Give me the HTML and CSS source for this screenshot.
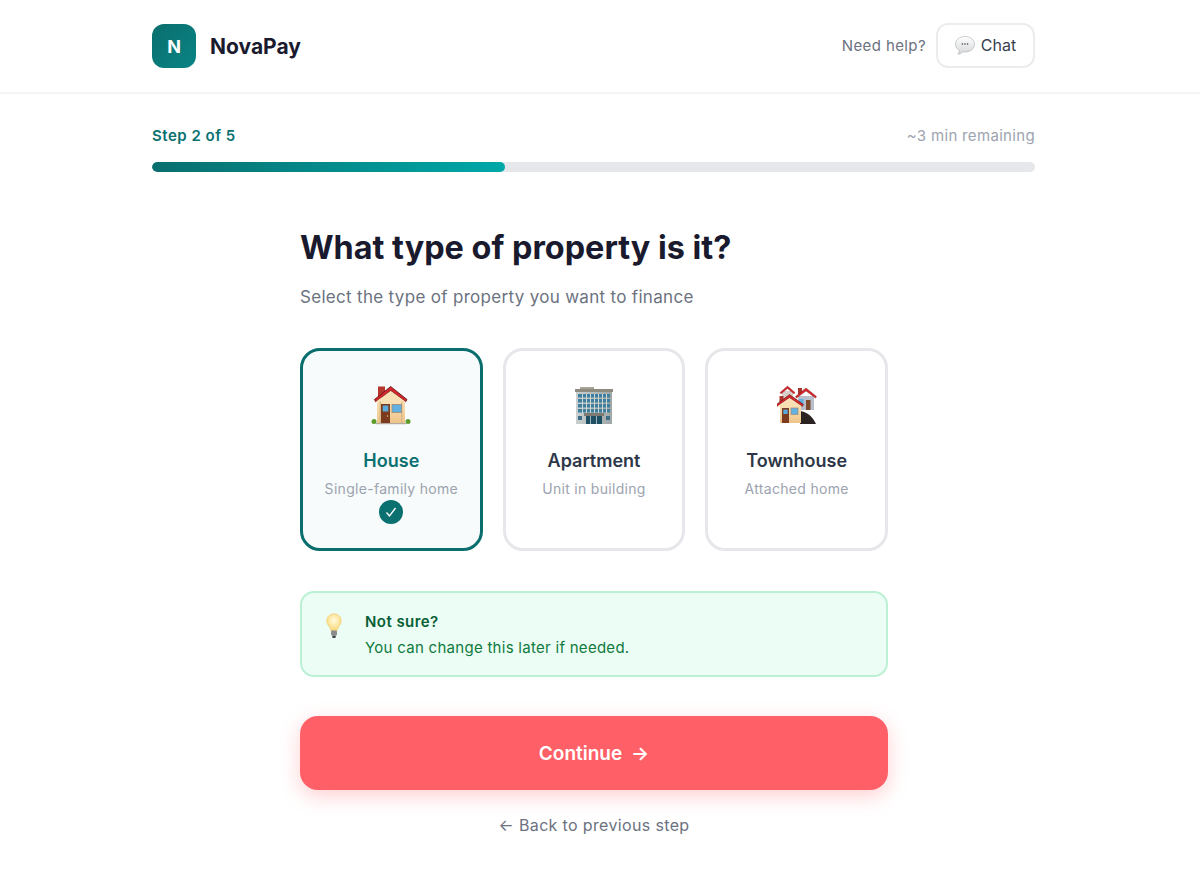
FILE: index.html
```html
<!DOCTYPE html>
<html lang="en">
<head>
    <meta charset="UTF-8">
    <meta name="viewport" content="width=device-width, initial-scale=1.0">
    <title>NovaPay - Property type</title>
    <link rel="stylesheet" href="styles.css">
</head>
<body>
    <svg class="defs" width="0" height="0" aria-hidden="true">
        <defs>
            <linearGradient id="wallGrad" x1="0" y1="0" x2="0" y2="1">
                <stop offset="0" stop-color="#fbe3b8"/>
                <stop offset="1" stop-color="#eec48a"/>
            </linearGradient>
            <linearGradient id="towerGrad" x1="0" y1="0" x2="1" y2="0">
                <stop offset="0" stop-color="#c9d0cf"/>
                <stop offset="1" stop-color="#9ea7a6"/>
            </linearGradient>
            <radialGradient id="bulbGrad" cx="0.5" cy="0.4" r="0.6">
                <stop offset="0" stop-color="#fffbe0"/>
                <stop offset="1" stop-color="#fbd877"/>
            </radialGradient>
            <linearGradient id="bubbleGrad" x1="0" y1="0" x2="0" y2="1">
                <stop offset="0" stop-color="#ffffff"/>
                <stop offset="1" stop-color="#d4d6d8"/>
            </linearGradient>
        </defs>
    </svg>

    <header class="topbar">
        <div class="brand">
            <div class="brand-mark">N</div>
            <span class="brand-name">NovaPay</span>
        </div>
        <div class="help">
            <span class="help-text">Need help?</span>
            <button class="chat-btn">
                <svg class="chat-icon" viewBox="0 0 20 19">
                    <path d="M10 .5C4.7.5.4 3.9.4 8.2c0 2.6 1.6 4.9 4.1 6.3-.2 1.3-.9 2.7-1.6 3.8 1.900-.3 3.800-1.400 5.100-2.500.6.1 1.300.2 2 .2 5.300 0 9.600-3.500 9.600-7.800S15.300.5 10 .5z" fill="url(#bubbleGrad)" stroke="#a9adb0" stroke-width=".6"/>
                    <circle cx="7.400" cy="8" r=".8" fill="#3a3f45"/>
                    <circle cx="10" cy="8" r=".8" fill="#3a3f45"/>
                    <circle cx="12.600" cy="8" r=".8" fill="#3a3f45"/>
                </svg>
                Chat
            </button>
        </div>
    </header>

    <section class="progress">
        <div class="progress-labels">
            <span class="step">Step 2 of 5</span>
            <span class="remaining">~3 min remaining</span>
        </div>
        <div class="track"><div class="fill" style="width: 40%"></div></div>
    </section>

    <main class="content">
        <h1>What type of property is it?</h1>
        <p class="subtitle">Select the type of property you want to finance</p>

        <div class="cards">
            <div class="card selected">
                <svg class="card-icon" viewBox="0 0 40 40">
                    <rect x="7" y="1.500" width="7" height="12" fill="#b5382f"/>
                    <rect x="6" y="15" width="28" height="23" fill="url(#wallGrad)"/>
                    <path d="M19.700 1.500 36 14.500l-1.300 2.300-15-11-15 11L3.400 14.500z" fill="#d0262c" stroke="#5e1010" stroke-width=".8"/>
                    <path d="M19.700 6 34.700 16.800H4.700z" fill="#f8dfb4"/>
                    <rect x="8.500" y="16.800" width="1.500" height="21.200" fill="#d9b98a"/>
                    <rect x="30" y="16.800" width="1.500" height="21.200" fill="#d9b98a"/>
                    <rect x="10" y="19" width="9" height="19" fill="#7c3a1e"/>
                    <rect x="11.700" y="20.500" width="5.600" height="6" fill="#59a9dc"/>
                    <circle cx="16.500" cy="31" r=".7" fill="#f2d16b"/>
                    <rect x="21" y="19.500" width="9.500" height="8" fill="#63b1e2" stroke="#9c8a72" stroke-width=".8"/>
                    <rect x="5" y="38" width="30" height="1.200" fill="#b3aba0"/>
                    <circle cx="3" cy="36.500" r="2.500" fill="#5d9c2c"/>
                    <circle cx="37" cy="36.500" r="2.500" fill="#5d9c2c"/>
                </svg>
                <div class="card-title">House</div>
                <div class="card-sub">Single-family home</div>
                <div class="check">
                    <svg viewBox="0 0 24 24" width="24" height="24">
                        <path d="M7.500 12.500l3 3.500 6-8" fill="none" stroke="#fff" stroke-width="1.400"/>
                    </svg>
                </div>
            </div>

            <div class="card">
                <svg class="card-icon" viewBox="0 0 40 40">
                    <rect x="6" y="2" width="14" height="3" fill="#a8a397"/>
                    <rect x="1" y="4" width="38" height="3" fill="#8f8a80"/>
                    <rect x="2" y="7" width="36" height="32" fill="url(#towerGrad)"/>
                    <g fill="#3f7f9e">
                        <rect x="4" y="9" width="32" height="3.500"/>
                        <rect x="4" y="14" width="32" height="3.500"/>
                        <rect x="4" y="19" width="32" height="3.500"/>
                        <rect x="4" y="24" width="32" height="3.500"/>
                    </g>
                    <g fill="#cfd6d6">
                        <rect x="8" y="9" width="1" height="19"/>
                        <rect x="12" y="9" width="1" height="19"/>
                        <rect x="16" y="9" width="1" height="19"/>
                        <rect x="20" y="9" width="1" height="19"/>
                        <rect x="24" y="9" width="1" height="19"/>
                        <rect x="28" y="9" width="1" height="19"/>
                        <rect x="32" y="9" width="1" height="19"/>
                    </g>
                    <rect x="4" y="31" width="4" height="4" fill="#3f6f88"/>
                    <rect x="32" y="31" width="4" height="4" fill="#3f6f88"/>
                    <rect x="10" y="28" width="20" height="3" fill="#7d7a72"/>
                    <rect x="12" y="31" width="16" height="8" fill="#1f4f63"/>
                    <rect x="16" y="31" width="1" height="8" fill="#9fb5bd"/>
                    <rect x="22" y="31" width="1" height="8" fill="#9fb5bd"/>
                </svg>
                <div class="card-title">Apartment</div>
                <div class="card-sub">Unit in building</div>
            </div>

            <div class="card">
                <svg class="card-icon" viewBox="0 0 40 40">
                    <rect x="5" y="6" width="11" height="9" fill="#d6cfca"/>
                    <path d="M10.500 1 18 7.500l-1 1.400-6.500-5.300L4 8.900 3 7.500z" fill="#d0262c" stroke="#7c1717" stroke-width=".3"/>
                    <rect x="21" y="11" width="16" height="14" fill="#b9c0cc"/>
                    <rect x="21" y="3" width="4" height="6" fill="#a8342c"/>
                    <path d="M29 3 39.500 11.500l-1 1.600L29 6l-9.500 7.100-1-1.600z" fill="#d0262c" stroke="#7c1717" stroke-width=".4"/>
                    <rect x="29" y="15" width="4.500" height="10" fill="#7c4a2a"/>
                    <rect x="22" y="14" width="4.500" height="5" fill="#63b1e2"/>
                    <path d="M23 39c1-5-1-10-3-13 8-1 16 5 19 13z" fill="#2a2321"/>
                    <rect x="3" y="19" width="21" height="19" fill="url(#wallGrad)"/>
                    <rect x="2.500" y="11" width="4" height="6" fill="#a8342c"/>
                    <path d="M12.500 9.500 26.500 19.500l-1.300 2.100-12.700-8.800-12.700 8.800L-.500 19.500z" fill="#d0262c" stroke="#5e1010" stroke-width=".6"/>
                    <path d="M12.500 13 25.200 21.600H-.200z" fill="#f8dfb4"/>
                    <rect x="5" y="23" width="7" height="15" fill="#7c3a1e"/>
                    <rect x="6.300" y="24.500" width="4.400" height="4.500" fill="#59a9dc"/>
                    <rect x="14" y="23" width="7" height="6.500" fill="#63b1e2" stroke="#9c8a72" stroke-width=".7"/>
                </svg>
                <div class="card-title">Townhouse</div>
                <div class="card-sub">Attached home</div>
            </div>
        </div>

        <div class="tip">
            <svg class="tip-icon" viewBox="0 0 16 26">
                <path d="M8 .8C3.900.8.800 3.900.800 7.800c0 2.400 1 3.900 2.200 5.500.9 1.200 1.700 2.500 1.900 4.200h6.200c.2-1.700 1-3 1.900-4.200 1.200-1.600 2.200-3.100 2.200-5.500C15.200 3.900 12.100.8 8 .8z" fill="url(#bulbGrad)" stroke="#edc968" stroke-width=".6"/>
                <rect x="5" y="17.500" width="6" height="5" rx="1" fill="#8b8b8b"/>
                <rect x="6.200" y="22.500" width="3.600" height="2.500" rx="1" fill="#45474a"/>
            </svg>
            <div class="tip-body">
                <div class="tip-title">Not sure?</div>
                <div class="tip-text">You can change this later if needed.</div>
            </div>
        </div>

        <button class="continue">Continue <span class="arrow">→</span></button>
        <a class="back" href="#">← Back to previous step</a>
    </main>
</body>
</html>
```

FILE: styles.css
```css
* {
    box-sizing: border-box;
}
body {
    margin: 0;
    background: #fff;
    font-family: 'Inter', 'Liberation Sans', sans-serif;
    color: #1a1a2e;
}
.defs {
    position: absolute;
}
.topbar {
    height: 94px;
    padding: 0 165px 0 152px;
    border-bottom: 2px solid #f3f4f6;
    display: flex;
    align-items: center;
    justify-content: space-between;
}
.brand {
    display: flex;
    align-items: center;
    gap: 14px;
}
.brand-mark {
    width: 44px;
    height: 44px;
    border-radius: 12px;
    background: linear-gradient(135deg, #0a6e6e, #0a8484);
    color: #fff;
    font-size: 18px;
    font-weight: 700;
    display: flex;
    align-items: center;
    justify-content: center;
}
.brand-name {
    font-size: 21px;
    font-weight: 700;
    color: #1a1a2e;
}
.help {
    display: flex;
    align-items: center;
    gap: 10px;
    margin-bottom: 2px;
}
.help-text {
    font-size: 15px;
    letter-spacing: 0.4px;
    color: #6b7280;
}
.chat-btn {
    height: 45px;
    width: 99px;
    padding: 0;
    background: #fff;
    border: 2px solid #ececee;
    border-radius: 12px;
    font-family: inherit;
    font-size: 16px;
    color: #374151;
    display: flex;
    align-items: center;
    justify-content: center;
    gap: 6px;
}
.chat-icon {
    width: 20px;
    height: 19px;
}
.progress {
    padding: 30px 165px 0 152px;
}
.progress-labels {
    display: flex;
    justify-content: space-between;
    align-items: center;
    height: 22px;
    margin-bottom: 16px;
}
.step {
    font-size: 15px;
    font-weight: 600;
    letter-spacing: 0.5px;
    color: #0a7070;
}
.remaining {
    font-size: 15px;
    letter-spacing: 0.33px;
    color: #9ca3af;
}
.track {
    height: 10px;
    background: #e5e7eb;
    border-radius: 5px;
    overflow: hidden;
}
.fill {
    height: 100%;
    border-radius: 5px;
    background: linear-gradient(90deg, #0a6e6e, #00a8a8);
}
.content {
    width: 588px;
    margin: 0 0 0 300px;
    padding-top: 54px;
}
h1 {
    margin: 0;
    font-size: 32.400px;
    line-height: 44px;
    font-weight: 700;
    color: #1a1a2e;
}
.subtitle {
    margin: 15px 0 0;
    font-size: 17px;
    line-height: 24px;
    letter-spacing: 0.31px;
    color: #6b7280;
}
.cards {
    margin-top: 39px;
    display: grid;
    grid-template-columns: repeat(3, 1fr);
    gap: 20px;
}
.card {
    height: 203px;
    padding-top: 34px;
    background: #fff;
    border: 3px solid #e6e7ea;
    border-radius: 20px;
    display: flex;
    flex-direction: column;
    align-items: center;
}
.card.selected {
    border-color: #0a6e6e;
    background: #f7fbfb;
}
.card-icon {
    width: 40px;
    height: 40px;
    flex: none;
}
.card-title {
    margin-top: 23px;
    font-size: 18px;
    line-height: 26px;
    font-weight: 600;
    color: #2d3748;
}
.selected .card-title {
    color: #0a7070;
}
.card-sub {
    margin-top: 5px;
    font-size: 14px;
    line-height: 20px;
    letter-spacing: 0.3px;
    color: #9ca3af;
}
.check {
    width: 24px;
    height: 24px;
    margin-top: 1px;
    border-radius: 50%;
    background: #0a7070;
}
.tip {
    margin-top: 40px;
    height: 86px;
    padding: 0 24px;
    background: #ecfdf5;
    border: 2px solid #bbf0d4;
    border-radius: 14px;
    display: flex;
    align-items: center;
    gap: 23px;
}
.tip-icon {
    width: 16px;
    height: 26px;
    flex: none;
    margin-top: -17px;
}
.tip-body {
    padding-top: 1px;
}
.tip-title {
    font-size: 15px;
    line-height: 22px;
    font-weight: 600;
    letter-spacing: 0.45px;
    color: #065f36;
}
.tip-text {
    margin-top: 4px;
    font-size: 15px;
    line-height: 22px;
    letter-spacing: 0.28px;
    color: #0f7a3e;
}
.continue {
    display: block;
    width: 100%;
    height: 74px;
    margin-top: 39px;
    border: none;
    border-radius: 18px;
    background: #ff5f66;
    color: #fff;
    font-family: inherit;
    font-size: 19px;
    font-weight: 600;
    box-shadow: 0 6px 20px rgba(255, 95, 102, 0.3);
}
.arrow {
    margin-left: 4px;
}
.back {
    display: block;
    margin-top: 23px;
    font-size: 16px;
    line-height: 24px;
    letter-spacing: 0.35px;
    text-align: center;
    color: #6b7280;
    text-decoration: none;
}
```
